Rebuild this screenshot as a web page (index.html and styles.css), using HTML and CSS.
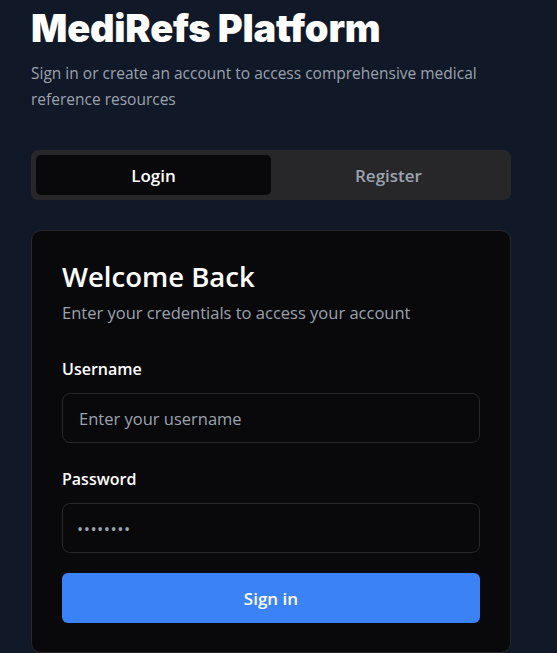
FILE: index.html
```html
<!DOCTYPE html>
<html lang="en">
<head>
<meta charset="utf-8">
<title>MediRefs Platform</title>
<link rel="stylesheet" href="styles.css">
</head>
<body>
<main class="page">
  <header class="intro">
    <h1 class="brand">MediRefs Platform</h1>
    <p class="lead">Sign in or create an account to access comprehensive medical reference resources</p>
  </header>
  <div class="tabs">
    <button class="tab tab-active" type="button">Login</button>
    <button class="tab" type="button">Register</button>
  </div>
  <section class="card">
    <h2 class="card-title">Welcome Back</h2>
    <p class="card-desc">Enter your credentials to access your account</p>
    <form class="form">
      <div class="field">
        <label class="label" for="username">Username</label>
        <input class="input" id="username" type="text" placeholder="Enter your username">
      </div>
      <div class="field">
        <label class="label" for="password">Password</label>
        <input class="input input-secret" id="password" type="password" placeholder="••••••••">
      </div>
      <button class="submit" type="button">Sign in</button>
    </form>
  </section>
</main>
</body>
</html>
```
FILE: styles.css
```css
* { box-sizing: border-box; }
html, body { margin: 0; padding: 0; }
body {
  background: #111827;
  color: #ffffff;
  font-family: "Open Sans", "Noto Sans", sans-serif;
}
.page {
  width: 480px;
  margin-left: 31px;
  padding-top: 2px;
}
.brand {
  margin: 0;
  font-family: Inter, "Open Sans", sans-serif;
  font-weight: 900;
  font-size: 38px;
  letter-spacing: -0.2px;
  line-height: 52px;
  color: #ffffff;
}
.lead {
  margin: 6px 0 0;
  font-size: 15.5px;
  line-height: 26px;
  color: #9ca3af;
}
.tabs {
  margin-top: 38px;
  display: grid;
  grid-template-columns: 1fr 1fr;
  padding: 5px;
  background: #27272a;
  border-radius: 7px;
}
.tab {
  height: 40px;
  border: 0;
  background: transparent;
  border-radius: 5px;
  font-family: inherit;
  font-size: 17px;
  font-weight: 600;
  color: #9ca3af;
}
.tab-active {
  background: #09090b;
  color: #ffffff;
}
.card {
  margin-top: 30px;
  background: #09090b;
  border: 1px solid #27272a;
  border-radius: 10px;
  padding: 28px 30px 29px;
}
.card-title {
  margin: 0;
  font-size: 27.5px;
  font-weight: 600;
  line-height: 36px;
}
.card-desc {
  margin: 6px 0 0;
  font-size: 16.5px;
  line-height: 24px;
  color: #9ca3af;
}
.form {
  margin-top: 32px;
  display: flex;
  flex-direction: column;
  gap: 24px;
}
.field {
  display: flex;
  flex-direction: column;
  gap: 12px;
}
.label {
  font-size: 16px;
  font-weight: 600;
  line-height: 24px;
}
.input {
  height: 50px;
  width: 100%;
  background: transparent;
  border: 1px solid #27272a;
  border-radius: 8px;
  padding: 0 16px;
  font-family: inherit;
  font-size: 16.5px;
  color: #ffffff;
}
.input::placeholder { color: #9ca3af; }
.input-secret { padding-left: 14px; }
.input-secret::placeholder { letter-spacing: 0.5px; }
.submit {
  margin-top: -4px;
  height: 50px;
  border: 0;
  border-radius: 6px;
  background: #3b82f6;
  color: #ffffff;
  font-family: inherit;
  font-size: 17px;
  font-weight: 600;
}
```
